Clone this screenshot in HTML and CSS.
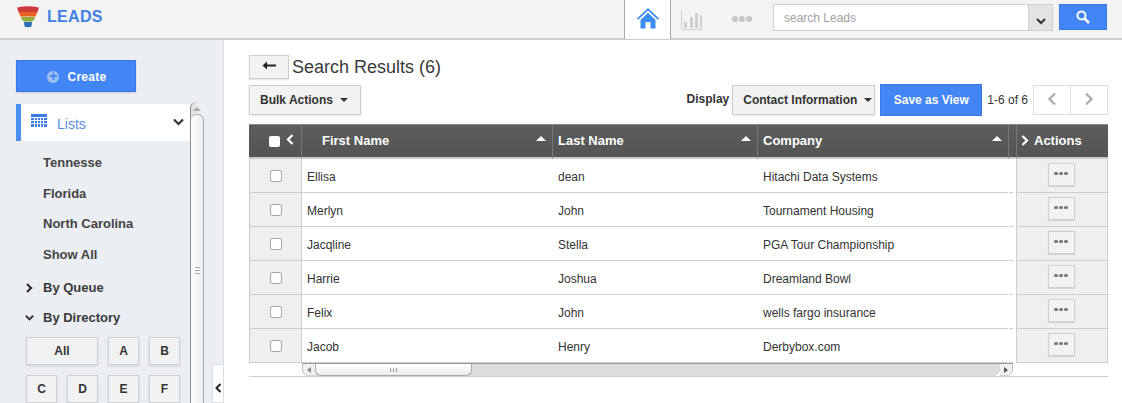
FILE: index.html
```html
<!DOCTYPE html>
<html lang="en">

<head>
    <meta charset="utf-8">
    <meta name="viewport" content="width=device-width, initial-scale=1.0">
    <title>Leads</title>
    <link rel="stylesheet" href="styles.css">
</head>

<body>
    <header class="topbar">
        <div class="brand">
            <svg class="funnel" width="22" height="22" viewBox="0 0 22 22">
                <path d="M0 1.500Q11 -1 22 1.500L20.500 6H1.500Z" fill="#d2393a"/>
                <path d="M1.500 6H20.500L18.500 10.500H3.500Z" fill="#e8631f"/>
                <path d="M3.500 11H18.500L15.500 15.500H6.500Z" fill="#93ad3a"/>
                <path d="M7 16H15L14.500 20.500Q11 22 7.500 20.500Z" fill="#2a6fb5"/>
            </svg>
            <span class="brand-name">LEADS</span>
        </div>
        <nav class="topnav">
            <a class="tab tab-active">
                <svg width="24" height="22" viewBox="0 0 24 22">
                    <path d="M12 1L1 11.500L2.200 12.800L12 3.500L21.800 12.800L23 11.500Z" fill="#3b8cf5"/>
                    <path d="M4.500 13L12 5.800L19.500 13V21.500H14.500V15H9.500V21.500H4.500Z" fill="#3b8cf5"/>
                </svg>
            </a>
            <a class="tab tab-chart">
                <svg width="22" height="20" viewBox="0 0 22 20">
                    <path d="M0.500 0V19.500H22" fill="none" stroke="#d0d0d0"/>
                    <path d="M3 12H6V18H3ZM9 7H12V18H9ZM14 3H17V18H14ZM19 5H21V18H19Z" fill="#cfcfcf"/>
                </svg>
            </a>
            <a class="tab tab-more">
                <span class="dot"></span><span class="dot"></span><span class="dot"></span>
            </a>
        </nav>
        <div class="search">
            <div class="search-input">search Leads</div>
            <div class="search-drop">
                <svg width="10" height="7" viewBox="0 0 10 7"><path d="M1 1L5 5L9 1" fill="none" stroke="#333" stroke-width="2"/></svg>
            </div>
        </div>
        <button class="search-btn">
            <svg width="14" height="14" viewBox="0 0 14 14">
                <circle cx="5.500" cy="5.500" r="4" fill="none" stroke="#fff" stroke-width="2"/>
                <path d="M8.500 8.500L13 13" stroke="#fff" stroke-width="2.500"/>
            </svg>
        </button>
    </header>

    <div class="page">
        <aside class="sidebar">
            <div class="side-col">
                <button class="create"><span class="plus">+</span>Create</button>
                <div class="lists-row">
                    <svg class="lists-icon" width="16" height="13" viewBox="0 0 16 13">
                        <path d="M0 0H16V13H0Z" fill="#3b7de8"/>
                        <path d="M0 3.500H16M0 6.500H16M0 9.500H16M3.500 3V13M6.500 3V13M9.500 3V13M12.500 3V13" stroke="#fff" stroke-width="1"/>
                    </svg>
                    <span class="lists-label">Lists</span>
                    <svg class="lists-chev" width="11" height="8" viewBox="0 0 11 8"><path d="M1 1.500L5.500 6L10 1.500" fill="none" stroke="#333" stroke-width="2.200"/></svg>
                </div>
                <ul class="list-items">
                    <li>Tennesse</li>
                    <li>Florida</li>
                    <li>North Carolina</li>
                    <li>Show All</li>
                </ul>
                <div class="group group-queue">
                    <svg width="8" height="10" viewBox="0 0 8 10"><path d="M1.500 1L5.500 5L1.500 9" fill="none" stroke="#333" stroke-width="2.200"/></svg>
                    By Queue
                </div>
                <div class="group group-dir">
                    <svg width="10" height="8" viewBox="0 0 10 8"><path d="M1 1.500L5 5.500L9 1.500" fill="none" stroke="#333" stroke-width="2.200"/></svg>
                    By Directory
                </div>
                <div class="letters">
                    <button class="letter letter-all">All</button>
                    <button class="letter">A</button>
                    <button class="letter">B</button>
                    <button class="letter">C</button>
                    <button class="letter">D</button>
                    <button class="letter">E</button>
                    <button class="letter">F</button>
                </div>
            </div>
            <div class="side-scroll">
                <div class="side-arrow"></div>
                <div class="side-thumb"><span class="grip"></span></div>
            </div>
            <div class="side-toggle">
                <svg width="7" height="10" viewBox="0 0 7 10"><path d="M5.500 1L1.500 5L5.500 9" fill="none" stroke="#222" stroke-width="2"/></svg>
            </div>
        </aside>

        <main class="content">
            <div class="title-row">
                <button class="back">
                    <svg width="14" height="10" viewBox="0 0 14 10"><path d="M5 0.500L0.500 4.500L5 8.500V5.500H14V3.500H5Z" fill="#222"/></svg>
                </button>
                <h1>Search Results (6)</h1>
            </div>
            <div class="toolbar">
                <button class="btn bulk">Bulk Actions<span class="caret"></span></button>
                <span class="display-label">Display</span>
                <button class="btn contact">Contact Information<span class="caret"></span></button>
                <button class="save">Save as View</button>
                <span class="count">1-6 of 6</span>
                <div class="pager">
                    <button><svg width="10" height="14" viewBox="0 0 10 14"><path d="M8 1.500L2.500 7L8 12.500" fill="none" stroke="#aaa" stroke-width="2.200"/></svg></button>
                    <button><svg width="10" height="14" viewBox="0 0 10 14"><path d="M2 1.500L7.500 7L2 12.500" fill="none" stroke="#aaa" stroke-width="2.200"/></svg></button>
                </div>
            </div>

            <div class="grid">
                <div class="head head-check">
                    <span class="head-box"></span>
                    <svg width="8" height="11" viewBox="0 0 8 11"><path d="M6.500 1L2 5.500L6.500 10" fill="none" stroke="#fff" stroke-width="2.200"/></svg>
                </div>
                <div class="head head-first">First Name<span class="sort"></span></div>
                <div class="head">Last Name<span class="sort"></span></div>
                <div class="head">Company<span class="sort"></span></div>
                <div class="head head-gap"></div>
                <div class="head head-actions">
                    <svg width="8" height="11" viewBox="0 0 8 11"><path d="M1.500 1L6 5.500L1.500 10" fill="none" stroke="#fff" stroke-width="2.200"/></svg>
                    Actions
                </div>

                <div class="cell cell-check"><span class="box"></span></div>
                <div class="cell">Ellisa</div>
                <div class="cell">dean</div>
                <div class="cell">Hitachi Data Systems</div>
                <div class="cell cell-gap"></div>
                <div class="cell cell-act"><button class="more"><i></i><i></i><i></i></button></div>

                <div class="cell cell-check"><span class="box"></span></div>
                <div class="cell">Merlyn</div>
                <div class="cell">John</div>
                <div class="cell">Tournament Housing</div>
                <div class="cell cell-gap"></div>
                <div class="cell cell-act"><button class="more"><i></i><i></i><i></i></button></div>

                <div class="cell cell-check"><span class="box"></span></div>
                <div class="cell">Jacqline</div>
                <div class="cell">Stella</div>
                <div class="cell">PGA Tour Championship</div>
                <div class="cell cell-gap"></div>
                <div class="cell cell-act"><button class="more"><i></i><i></i><i></i></button></div>

                <div class="cell cell-check"><span class="box"></span></div>
                <div class="cell">Harrie</div>
                <div class="cell">Joshua</div>
                <div class="cell">Dreamland Bowl</div>
                <div class="cell cell-gap"></div>
                <div class="cell cell-act"><button class="more"><i></i><i></i><i></i></button></div>

                <div class="cell cell-check"><span class="box"></span></div>
                <div class="cell">Felix</div>
                <div class="cell">John</div>
                <div class="cell">wells fargo insurance</div>
                <div class="cell cell-gap"></div>
                <div class="cell cell-act"><button class="more"><i></i><i></i><i></i></button></div>

                <div class="cell cell-check"><span class="box"></span></div>
                <div class="cell">Jacob</div>
                <div class="cell">Henry</div>
                <div class="cell">Derbybox.com</div>
                <div class="cell cell-gap"></div>
                <div class="cell cell-act"><button class="more"><i></i><i></i><i></i></button></div>
            </div>

            <div class="hscroll-row">
                <div class="hscroll">
                    <span class="hs-cap hs-cap-left"><span class="hs-arrow hs-left"></span></span>
                    <div class="hs-track">
                        <div class="hs-thumb"><span class="hs-grip"></span></div>
                    </div>
                    <span class="hs-cap hs-cap-right"><span class="hs-arrow hs-right"></span></span>
                </div>
            </div>
        </main>
    </div>
</body>

</html>
```

FILE: styles.css
```css
* {
    box-sizing: border-box;
}

html,
body {
    height: 100%;
}

body {
    margin: 0;
    overflow: hidden;
    background-color: #fff;
    color: #333;
    font-family: "Liberation Sans", Arial, sans-serif;
    font-size: 12px;
}

button {
    font-family: inherit;
    cursor: pointer;
}

/* top bar */
.topbar {
    display: flex;
    align-items: flex-start;
    height: 40px;
    background-color: #f3f3f3;
    border-bottom: 2px solid #cdcdcd;
}

.brand {
    display: flex;
    align-items: center;
    width: 624px;
    height: 38px;
    padding: 0 0 4px 17px;
}

.funnel {
    flex: none;
}

.brand-name {
    margin-left: 8px;
    color: #3f7fe6;
    font-size: 16px;
    font-weight: bold;
    letter-spacing: 0.3px;
}

.topnav {
    display: flex;
    height: 39px;
}

.tab {
    display: flex;
    align-items: center;
    justify-content: center;
    height: 39px;
}

.tab-active {
    width: 47px;
    background-color: #fff;
    border-left: 1px solid #aaa;
    border-right: 1px solid #aaa;
    padding-bottom: 3px;
}

.tab-chart {
    width: 47px;
    padding: 1px 5px 0 0;
}

.tab-more {
    gap: 1px;
    width: 55px;
    padding: 0 8px 2px 0;
}

.dot {
    width: 6px;
    height: 6px;
    border-radius: 50%;
    background-color: #c6c6c6;
}

.search {
    display: flex;
    width: 280px;
    height: 27px;
    margin-top: 4px;
    border: 1px solid #cfcfcf;
    background-color: #fff;
}

.search-input {
    flex: 1;
    padding: 6px 10px;
    color: #a2a2a2;
}

.search-drop {
    display: flex;
    align-items: flex-end;
    justify-content: center;
    width: 24px;
    padding-bottom: 5px;
    background-color: #e3e3e3;
    border-left: 1px solid #cfcfcf;
}

.search-btn {
    display: flex;
    align-items: center;
    justify-content: center;
    width: 48px;
    height: 26px;
    margin: 4px 0 0 6px;
    padding: 0;
    border: 1px solid #3a78e0;
    background-color: #4285f4;
}

/* sidebar */
.page {
    display: flex;
    height: 363px;
}

.sidebar {
    position: relative;
    display: flex;
    flex: none;
    width: 224px;
    background-color: #ebeef3;
    border-right: 1px solid #dcdcdc;
    overflow: hidden;
}

.side-col {
    flex: none;
    width: 190px;
    padding: 20px 0 0 16px;
}

.create {
    display: flex;
    align-items: center;
    justify-content: center;
    width: 120px;
    height: 32px;
    padding: 1px 0 0 2px;
    border: 1px solid #3a78e0;
    background-color: #4285f4;
    box-shadow: 0 1px 2px rgba(0, 0, 0, 0.15);
    color: #fff;
    font-size: 12px;
    font-weight: bold;
    letter-spacing: 0.3px;
}

.plus {
    display: inline-block;
    width: 12px;
    height: 12px;
    margin-right: 8px;
    border-radius: 50%;
    background-color: #9fbff5;
    color: #4285f4;
    font-size: 14px;
    line-height: 11px;
    letter-spacing: 0;
}

.lists-row {
    display: flex;
    align-items: center;
    width: 174px;
    height: 37px;
    margin-top: 12px;
    padding: 0 6px 0 10px;
    background-color: #fff;
    border-left: 5px solid #4d8ef5;
}

.lists-icon {
    margin-bottom: 4px;
}

.lists-chev {
    margin-bottom: 2px;
}

.lists-label {
    flex: 1;
    margin: 2px 0 0 10px;
    color: #5b8fe8;
    font-size: 14px;
}

.list-items {
    margin: 0;
    padding: 7px 0 0 27px;
    list-style: none;
    font-size: 13px;
    font-weight: bold;
    color: #444;
}

.list-items li {
    height: 30.7px;
    line-height: 30.7px;
}

.group {
    display: flex;
    align-items: center;
    gap: 9px;
    height: 30px;
    padding-left: 9px;
    font-size: 13px;
    font-weight: bold;
    color: #3a3a3a;
}

.group-queue {
    margin-top: 2px;
}

.group svg {
    width: 9px;
}

.letters {
    display: grid;
    grid-template-columns: repeat(4, 31px);
    grid-auto-rows: 28px;
    gap: 10px 10px;
    width: 154px;
    margin: 4px 0 0 10px;
}

.letter {
    padding: 0;
    border: 1px solid #cfcfcf;
    background-color: #f2f2f2;
    box-shadow: 0 1px 2px rgba(0, 0, 0, 0.12);
    color: #333;
    font-size: 12px;
    font-weight: bold;
}

.letter-all {
    grid-column: span 2;
}

.side-scroll {
    flex: none;
    width: 14px;
    margin-top: 62px;
    height: 320px;
    background: linear-gradient(to right, #dcdcdc, #f4f4f4);
    border-left: 1px solid #8f8f8f;
    border-radius: 6px 6px 0 0;
}

.side-arrow {
    height: 13px;
    position: relative;
}

.side-arrow::after {
    content: "";
    position: absolute;
    left: 2px;
    top: 5px;
    border: 4px solid transparent;
    border-top: 0;
    border-bottom: 4px solid #aaa;
}

.side-thumb {
    display: flex;
    align-items: center;
    justify-content: center;
    height: 300px;
    background: linear-gradient(to right, #fff, #ececec);
    border: 1px solid #a8a8a8;
    border-left: 0;
    border-radius: 6px 6px 0 0;
    margin-top: -1px;
    padding-top: 13px;
}

.grip {
    width: 5px;
    height: 7px;
    border-top: 1px solid #aaa;
    border-bottom: 1px solid #aaa;
    background: linear-gradient(#aaa, #aaa) center / 5px 1px no-repeat;
}

.side-toggle {
    position: absolute;
    right: 0;
    bottom: 0;
    display: flex;
    align-items: center;
    justify-content: center;
    width: 11px;
    height: 39px;
    padding: 9px 0 0 1px;
    background-color: #fff;
    border: 1px solid #dcdcdc;
    border-right: 0;
}

/* main */
.content {
    flex: 1;
    padding: 14px 14px 0 25px;
}

.title-row {
    display: flex;
    align-items: center;
    height: 26px;
}

.back {
    width: 40px;
    height: 24px;
    padding: 0 0 2px;
    border: 1px solid #cfcfcf;
    background-color: #f2f2f2;
    box-shadow: 0 1px 1px rgba(0, 0, 0, 0.1);
}

h1 {
    margin: 0 0 0 3px;
    font-size: 18px;
    font-weight: normal;
    color: #3a3a3a;
}

.toolbar {
    display: flex;
    align-items: center;
    height: 32px;
    margin-top: 4px;
}

.btn {
    display: flex;
    align-items: center;
    height: 30px;
    border: 1px solid #cfcfcf;
    background-color: #f2f2f2;
    box-shadow: 0 1px 2px rgba(0, 0, 0, 0.12);
    color: #333;
    font-size: 12px;
    font-weight: bold;
}

.bulk {
    width: 112px;
    padding: 0 0 0 10px;
}

.caret {
    width: 0;
    height: 0;
    margin-left: 7px;
    border: 4px solid transparent;
    border-top: 4px solid #333;
    border-bottom: 0;
}

.display-label {
    margin-left: auto;
    font-weight: bold;
    padding-bottom: 3px;
}

.contact {
    width: 143px;
    margin-left: 3px;
    padding: 0 0 0 10px;
}

.save {
    width: 102px;
    height: 32px;
    margin-left: 5px;
    border: 1px solid #3a78e0;
    background-color: #4285f4;
    color: #fff;
    font-size: 12px;
    font-weight: bold;
}

.count {
    margin: 0 5px;
}

.pager {
    display: flex;
    width: 75px;
    height: 30px;
    border: 1px solid #dedede;
}

.pager button {
    flex: 1;
    padding: 0;
    border: 0;
    background-color: #fff;
}

.pager button + button {
    border-left: 1px solid #dedede;
}

.grid {
    display: grid;
    grid-template-columns: 53px 250px 205px 251px 8px 92px;
    grid-template-rows: 35px;
    grid-auto-rows: 34px;
    width: 859px;
    margin-top: 8px;
}

.head {
    display: flex;
    align-items: center;
    padding: 0 0 2px 5px;
    background: linear-gradient(#5d5d5d, #545454);
    border-top: 1px solid #888;
    border-bottom: 2px solid #c9c9c9;
    border-left: 1px solid #777;
    color: #fff;
    font-size: 13px;
    font-weight: bold;
}

.head-check {
    gap: 6px;
    padding: 0 0 0 20px;
    border-left: 0;
    border-right: 1px solid #777;
}

.head-check svg {
    margin-bottom: 3px;
}

.head-box {
    width: 11px;
    height: 11px;
    border-radius: 2px;
    background-color: #fff;
    margin-top: 1px;
}

.head-first {
    padding-left: 20px;
    border-left: 0;
}

.head-gap {
    padding: 0;
}

.head-actions {
    gap: 5px;
    padding-left: 4px;
}

.sort {
    width: 0;
    height: 0;
    margin: 0 6px 0 auto;
    border: 5px solid transparent;
    border-top: 0;
    border-bottom: 5px solid #fff;
    transform: translateY(-2px);
}

.cell {
    display: flex;
    align-items: center;
    padding: 2px 0 0 6px;
    background-color: #fff;
    border-bottom: 1px solid #cdcdcd;
    color: #333;
}

.cell-check + .cell {
    padding-left: 5px;
}

.cell-check {
    justify-content: center;
    padding: 1px 0 0;
    background-color: #efefef;
    border-left: 1px solid #cdcdcd;
    border-right: 1px solid #cdcdcd;
}

.box {
    width: 12px;
    height: 12px;
    border: 1px solid #a5a5a5;
    border-radius: 2px;
    background-color: #fff;
}

.cell-gap {
    padding: 0;
    border-bottom: 0;
    background: linear-gradient(#cdcdcd, #cdcdcd) 1px 100% / 4px 1px no-repeat;
}

.cell-act {
    justify-content: center;
    padding: 0 2px 2px 0;
    background-color: #efefef;
    border-left: 1px solid #cdcdcd;
    border-right: 1px solid #cdcdcd;
}

.more {
    display: flex;
    align-items: center;
    justify-content: center;
    gap: 1.500px;
    width: 27px;
    height: 23px;
    padding: 0 0 2px;
    border: 1px solid #cfcfcf;
    background-color: #f2f2f2;
    box-shadow: 0 1px 1px rgba(0, 0, 0, 0.1);
}

.more i {
    width: 3.500px;
    height: 3.500px;
    border-radius: 50%;
    background-color: #777;
}

.hscroll-row {
    width: 859px;
    height: 14px;
    padding-left: 53px;
    border-bottom: 1px solid #cdcdcd;
}

.hscroll {
    display: flex;
    width: 711px;
    height: 13px;
    border-top: 1px solid #9a9a9a;
}

.hs-cap {
    display: flex;
    align-items: center;
    flex: none;
    width: 13px;
    background-color: #f1f1f1;
    border-bottom: 1px solid #d0d0d0;
}

.hs-cap-left {
    border-radius: 0 0 0 6px;
    border-left: 1px solid #c4c4c4;
}

.hs-cap-right {
    justify-content: center;
    border-radius: 0 0 6px 0;
    border-right: 1px solid #c4c4c4;
}

.hs-arrow {
    width: 0;
    height: 0;
    border: 3px solid transparent;
}

.hs-left {
    margin-left: 4px;
    border-left: 0;
    border-right: 4px solid #888;
}

.hs-right {
    border-right: 0;
    border-left: 4px solid #555;
}

.hs-track {
    flex: 1;
    background-color: #dcdcda;
    border-radius: 0 0 6px 0;
}

.hs-thumb {
    display: flex;
    align-items: center;
    justify-content: center;
    width: 157px;
    height: 12px;
    background: linear-gradient(#fff, #ececec);
    border: 1px solid #a8a8a8;
    border-top: 0;
    border-radius: 0 0 6px 6px;
}

.hs-grip {
    width: 7px;
    height: 4px;
    border-left: 1px solid #999;
    border-right: 1px solid #999;
    background: linear-gradient(#999, #999) center / 1px 4px no-repeat;
}
```
